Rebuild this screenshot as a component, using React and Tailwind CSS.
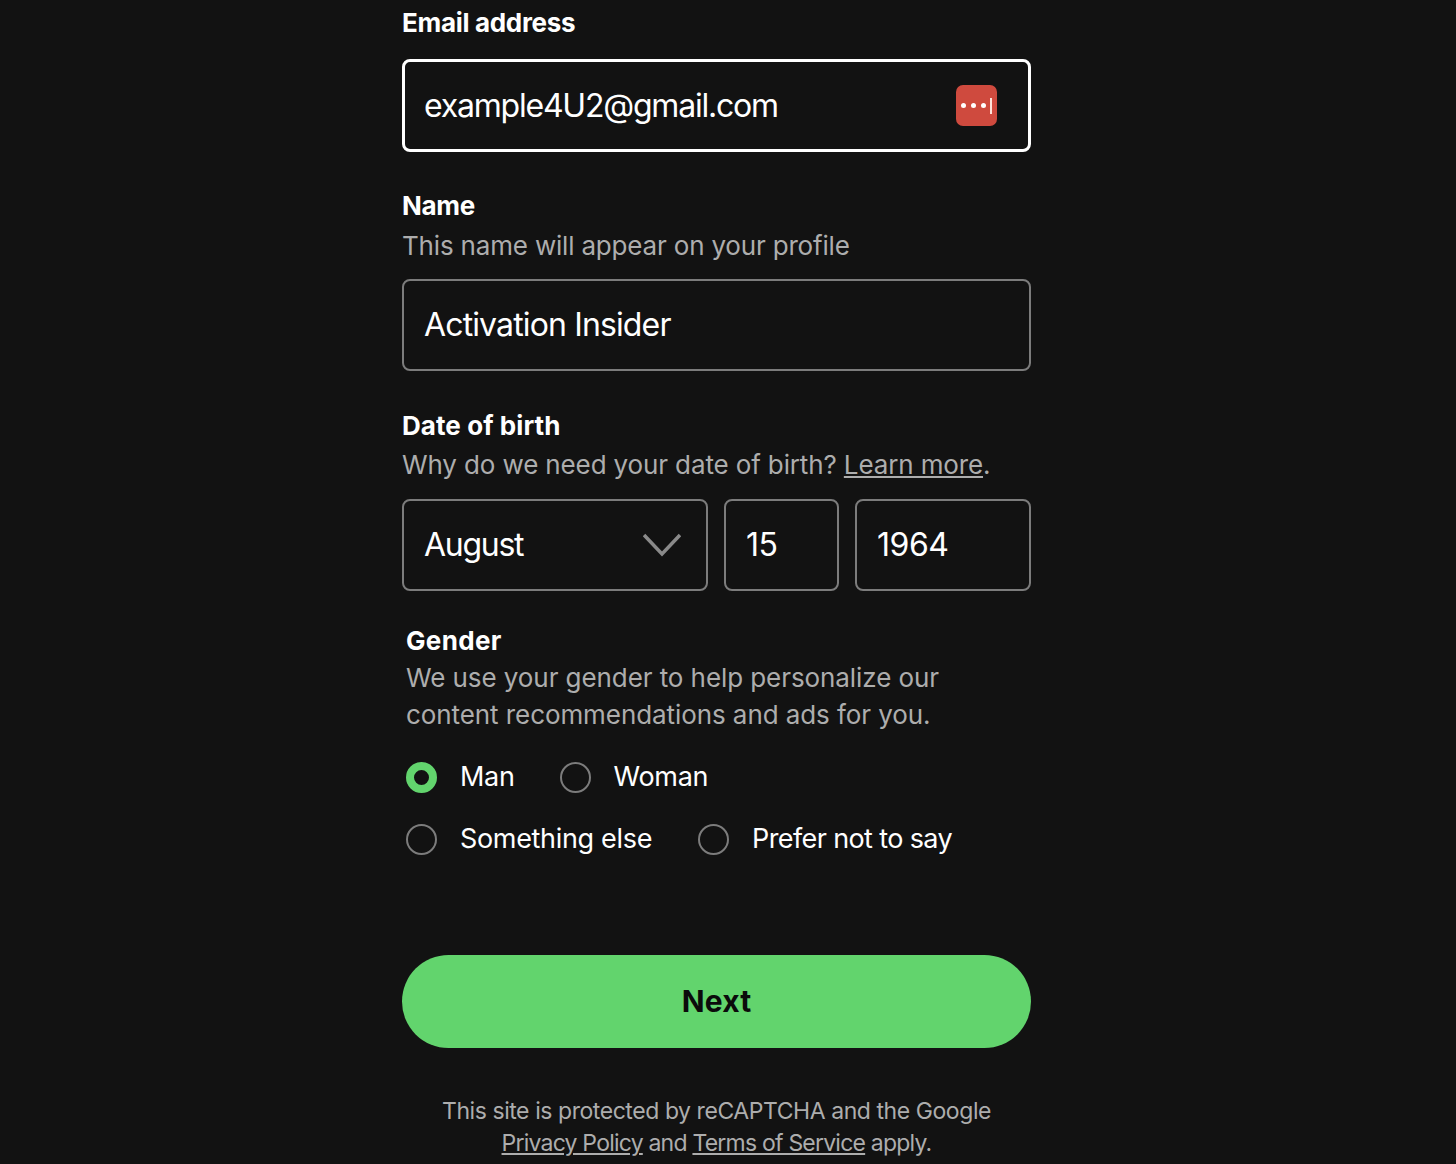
const fontStack = { fontFamily: "Inter, 'Liberation Sans', sans-serif" };

function FieldLabel({ children, className = "tracking-[-0.012em]" }) {
  return <p className={`h-[28px] text-[26px] leading-[28px] font-bold text-white ${className}`}>{children}</p>;
}

function Hint({ children, className = "" }) {
  return <p className={`text-[26px] leading-[37px] text-[#adadad] ${className}`}>{children}</p>;
}

function Box({ className = "", children }) {
  return (
    <div className={`flex items-center rounded-[8px] border-2 bg-[#121212] text-[32px] text-white ${className}`}>
      {children}
    </div>
  );
}

function Radio({ label, checked = false, tracking = "tracking-[-0.012em]" }) {
  return (
    <div className="flex items-center gap-[23px]">
      {checked ? (
        <span className="h-[31px] w-[31px] rounded-full border-[8px] border-[#62d46d] bg-[#121212]" />
      ) : (
        <span className="h-[31px] w-[31px] rounded-full border-2 border-[#7c7c7c]" />
      )}
      <span className={`text-[27px] leading-[32px] text-white ${tracking}`}>{label}</span>
    </div>
  );
}

export default function App() {
  return (
    <div className="h-[1164px] overflow-hidden bg-[#121212]" style={fontStack}>
      <div className="ml-[402px] w-[629px] pt-[9px]">
        <FieldLabel>Email address</FieldLabel>
        <Box className="mt-[22px] h-[93px] justify-between border-[3px] border-white pl-[19px] pr-[31px] tracking-[-0.038em]">
          <span>example4U2@gmail.com</span>
          <span className="flex h-[41px] w-[41px] items-center gap-[5px] rounded-[7px] bg-[#cf4a3e] pl-[5px]">
            <span className="h-[5px] w-[5px] rounded-full bg-white" />
            <span className="h-[5px] w-[5px] rounded-full bg-white" />
            <span className="h-[5px] w-[5px] rounded-full bg-white" />
            <span className="-ml-[1px] h-[16px] w-[2px] bg-[#ffe3da]" />
          </span>
        </Box>

        <FieldLabel className="mt-[40px] tracking-[-0.012em]">Name</FieldLabel>
        <Hint className="mt-[7px] tracking-[-0.007em]">This name will appear on your profile</Hint>
        <Box className="mt-[15px] h-[92px] border-[#7c7c7c] pl-[20px] tracking-[-0.027em]">Activation Insider</Box>

        <FieldLabel className="mt-[41px] tracking-[0.003em]">Date of birth</FieldLabel>
        <Hint className="mt-[6px] tracking-[-0.005em]">
          Why do we need your date of birth? <span className="underline">Learn more</span>.
        </Hint>
        <div className="mt-[16px] flex gap-[16px] tracking-[-0.03em]">
          <Box className="h-[92px] w-[306px] justify-between border-[#7c7c7c] pl-[20px] pr-[25px] tracking-[-0.04em]">
            <span>August</span>
            <svg width="38" height="24" viewBox="0 0 38 24" fill="none" stroke="#8a8a8a" strokeWidth="3.5">
              <path d="M1 2 L19 21 L37 2" />
            </svg>
          </Box>
          <Box className="h-[92px] w-[115px] border-[#7c7c7c] pl-[20px]">15</Box>
          <Box className="h-[92px] w-[176px] border-[#7c7c7c] pl-[20px]">1964</Box>
        </div>

        <div className="mt-[36px] pl-[4px]">
          <FieldLabel className="tracking-[0.013em]">Gender</FieldLabel>
          <Hint className="mt-[4px] tracking-[-0.003em]">
            We use your gender to help personalize our
            <br />
            content recommendations and ads for you.
          </Hint>
          <div className="mt-[28px] flex gap-[45px]">
            <Radio label="Man" checked />
            <Radio label="Woman" />
          </div>
          <div className="mt-[30px] flex gap-[46px]">
            <Radio label="Something else" />
            <Radio label="Prefer not to say" tracking="tracking-[-0.023em]" />
          </div>
        </div>

        <button type="button" className="mt-[100px] h-[93px] w-full rounded-full bg-[#62d46d] text-[30px] font-bold tracking-[0.005em] text-[#0b0b0b]">
          Next
        </button>

        <p className="mt-[47px] text-center text-[23px] leading-[32px] tracking-[-0.019em] text-[#adadad]">
          This site is protected by reCAPTCHA and the Google
          <br />
          <span className="tracking-[-0.034em]">
            <span className="underline">Privacy Policy</span> and <span className="underline">Terms of Service</span> apply.
          </span>
        </p>
      </div>
    </div>
  );
}
